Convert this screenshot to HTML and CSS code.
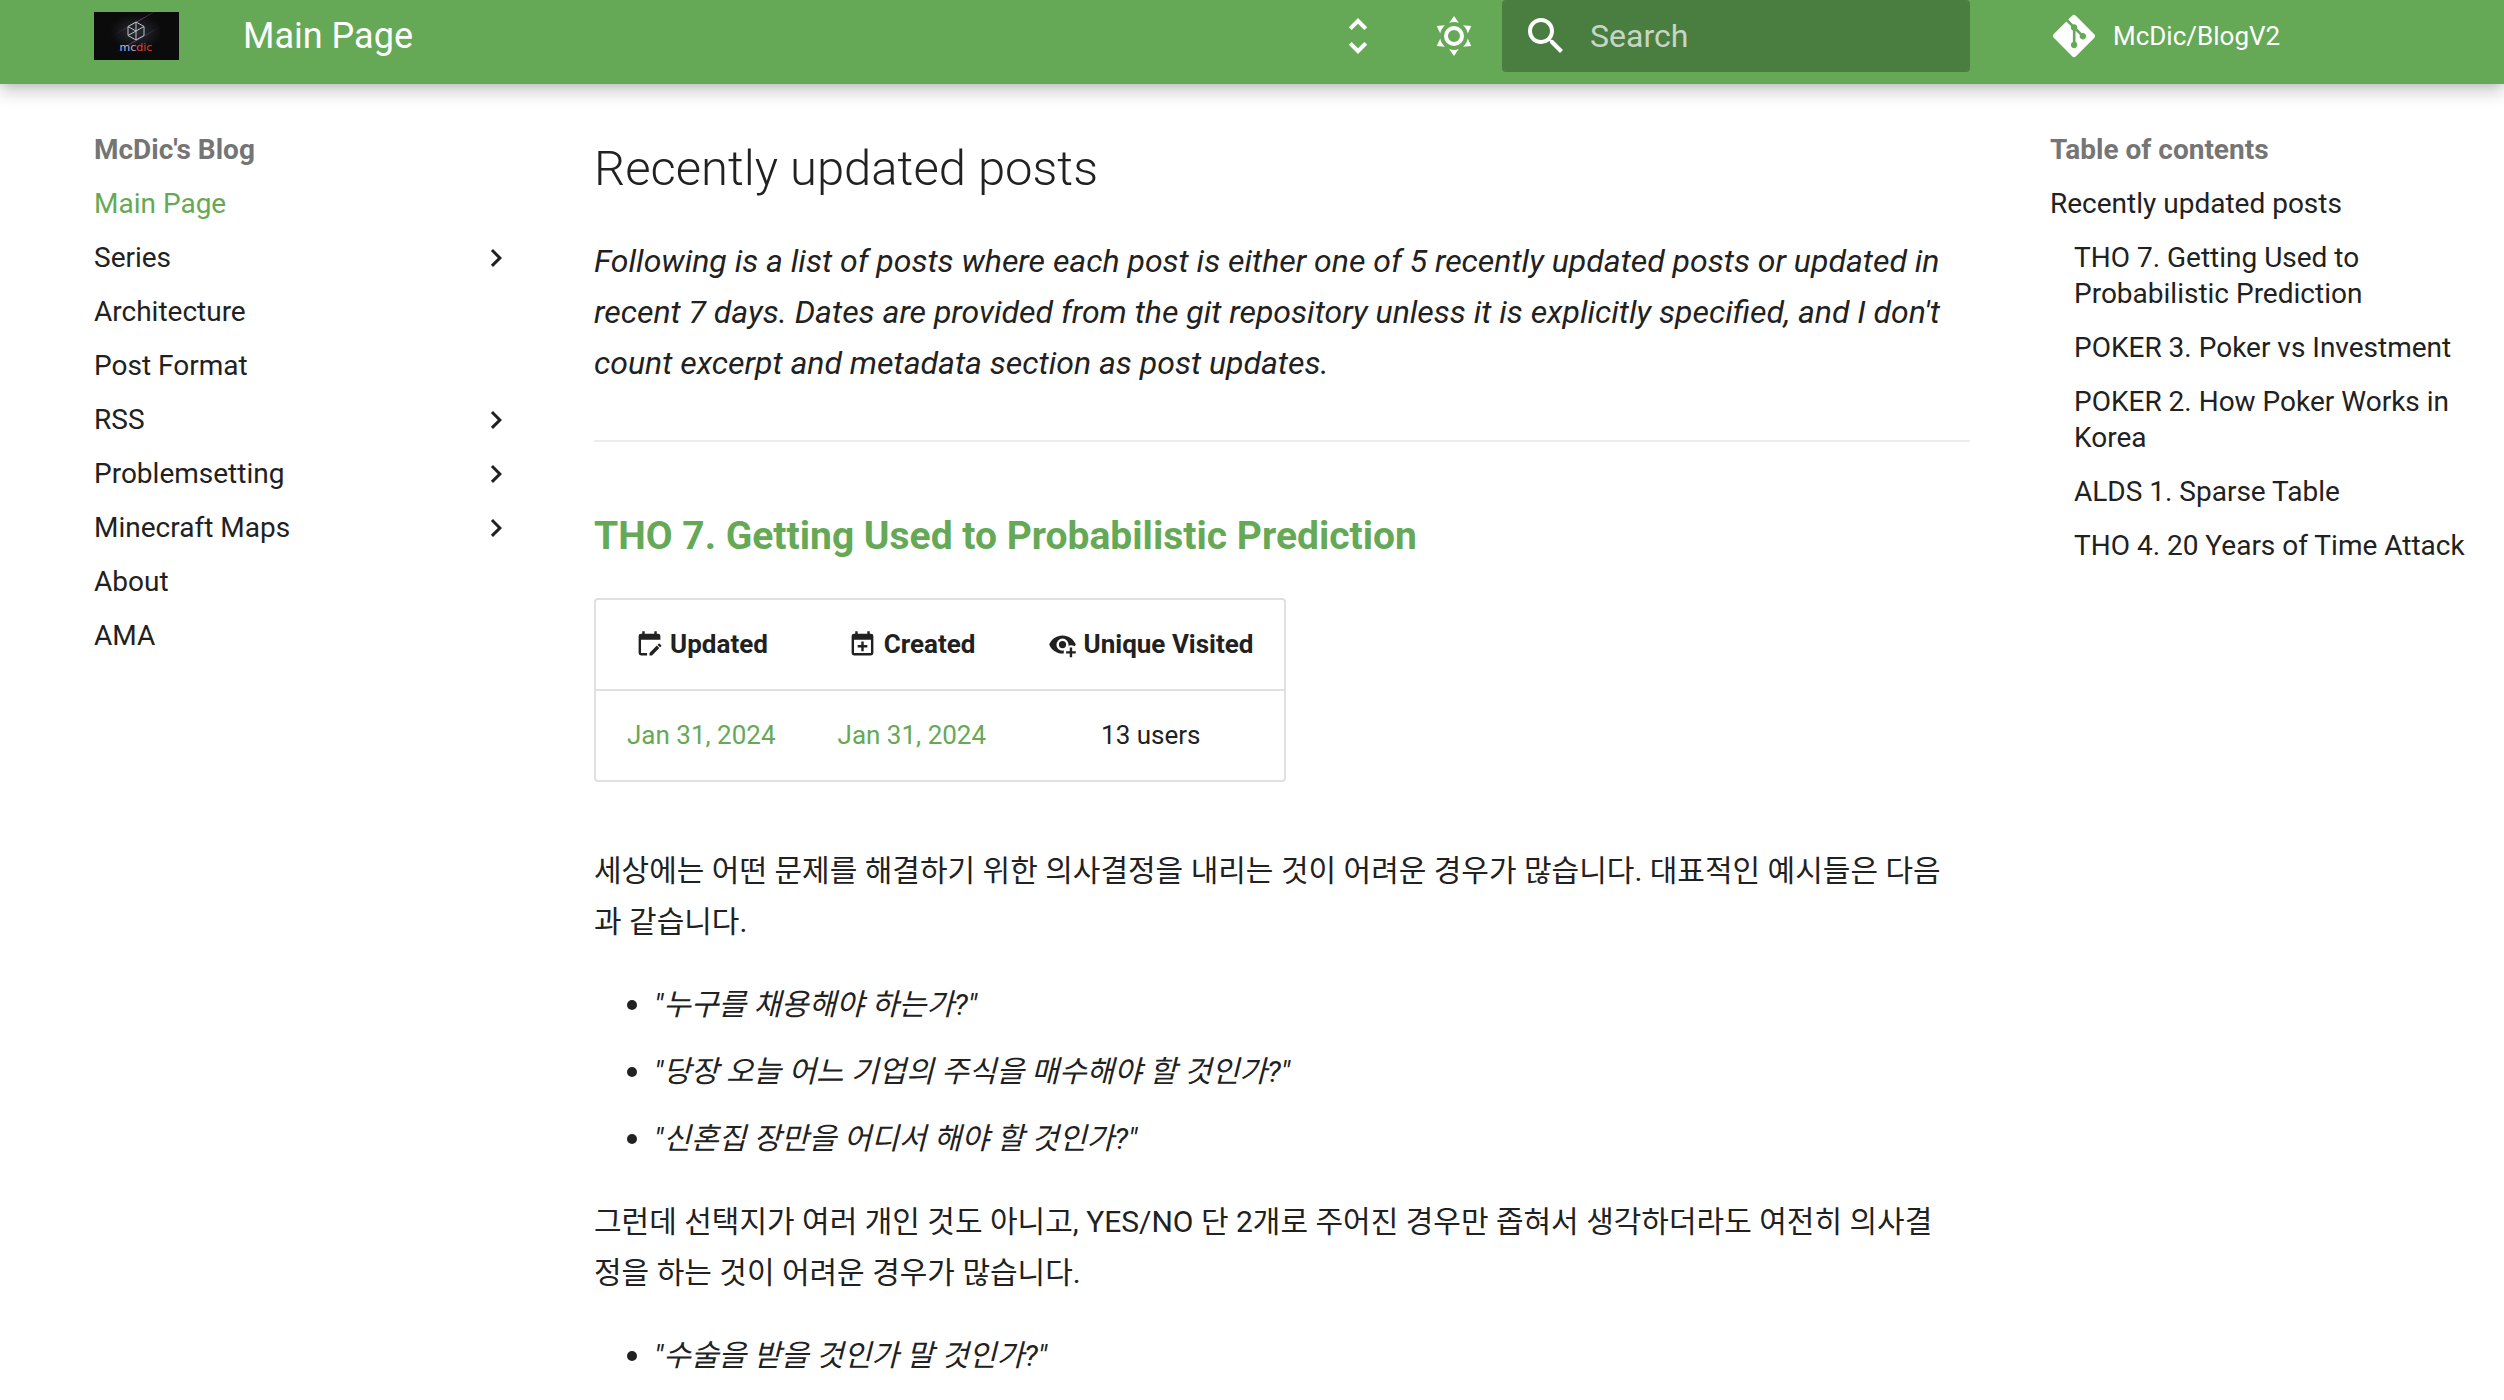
FILE: index.html
```html
<!DOCTYPE html>
<html lang="ko">
<head>
<meta charset="utf-8">
<title>Main Page - McDic's Blog</title>
<link rel="stylesheet" href="styles.css">
</head>
<body>
<header class="header">
  <div class="header-inner">
    <a class="logo" href="#" aria-label="McDic's Blog">
      <svg viewBox="0 0 85 48" width="85" height="48">
        <defs>
          <linearGradient id="word" x1="29" x2="56" y1="0" y2="0" gradientUnits="userSpaceOnUse">
            <stop offset="0" stop-color="#9cc8f4"/><stop offset=".35" stop-color="#c9b4dc"/><stop offset=".6" stop-color="#d8483c"/><stop offset="1" stop-color="#e0352b"/>
          </linearGradient>
          <radialGradient id="glow"><stop offset="0" stop-color="#2a2c30"/><stop offset="1" stop-color="#0b0b0c"/></radialGradient>
          <linearGradient id="streak"><stop offset="0" stop-color="#6b3a72" stop-opacity="0"/><stop offset=".5" stop-color="#7a4a80"/><stop offset="1" stop-color="#6b3a72" stop-opacity="0"/></linearGradient>
        </defs>
        <rect width="85" height="48" fill="#0b0b0c"/>
        <ellipse cx="42" cy="20" rx="26" ry="18" fill="url(#glow)"/>
        <path d="M20 23 60 0M22 40 66 15" stroke="url(#streak)" fill="none"/>
        <path d="m42 10 8 4.500v9L42 28l-8-4.500v-9zM34 14.500l8 4.500 8-4.500M42 10v18M34 23.500l8-4.500" fill="none" stroke="#b9c3cc" stroke-width="1"/>
        <text class="logo-word" x="42" y="39" text-anchor="middle" fill="url(#word)">mcdic</text>
      </svg>
    </a>
    <span class="header-title">Main Page</span>
    <button class="icon-button" type="button" aria-label="Change language">
      <svg viewBox="0 0 24 24"><path d="M12 18.170 8.830 15l-1.420 1.410L12 21l4.590-4.590L15.170 15M12 5.830 15.170 9l1.420-1.410L12 3 7.410 7.590 8.830 9 12 5.830Z"/></svg>
    </button>
    <button class="icon-button" type="button" aria-label="Switch theme">
      <svg viewBox="0 0 24 24"><path d="M12 7a5 5 0 0 1 5 5 5 5 0 0 1-5 5 5 5 0 0 1-5-5 5 5 0 0 1 5-5m0 2a3 3 0 0 0-3 3 3 3 0 0 0 3 3 3 3 0 0 0 3-3 3 3 0 0 0-3-3m0-7 2.390 3.420C13.650 5.150 12.840 5 12 5s-1.650.15-2.390.42L12 2M3.340 7l4.160-.35A7.200 7.200 0 0 0 5.940 8.500c-.44.74-.69 1.500-.83 2.290L3.340 7m.02 10 1.760-3.770a7.131 7.131 0 0 0 2.380 4.140L3.360 17M20.650 7l-1.770 3.790a7.020 7.020 0 0 0-2.380-4.150l4.150.36m-.01 10-4.140.36c.59-.51 1.120-1.140 1.540-1.860.42-.73.69-1.500.83-2.290L20.640 17M12 22l-2.410-3.440c.74.27 1.550.44 2.410.44.82 0 1.630-.17 2.370-.44L12 22Z"/></svg>
    </button>
    <label class="search">
      <svg viewBox="0 0 24 24" aria-hidden="true"><path d="M9.500 3A6.500 6.500 0 0 1 16 9.500c0 1.610-.59 3.090-1.560 4.230l.27.27h.79l5 5-1.500 1.500-5-5v-.79l-.27-.27A6.516 6.516 0 0 1 9.500 16 6.500 6.500 0 0 1 3 9.500 6.500 6.500 0 0 1 9.500 3m0 2C7 5 5 7 5 9.500S7 14 9.500 14 14 12 14 9.500 12 5 9.500 5Z"/></svg>
      <input type="text" placeholder="Search" aria-label="Search">
    </label>
    <a class="repo" href="#">
      <svg viewBox="0 0 448 512"><path d="M439.550 236.050 244 40.450a28.870 28.870 0 0 0-40.810 0l-40.660 40.630 51.520 51.520c27.060-9.140 52.680 16.770 43.390 43.680l49.660 49.660c34.230-11.800 61.180 31 35.470 56.690-26.490 26.490-70.210-2.870-56-37.340L240.220 199v121.850c25.300 12.540 22.260 41.850 9.080 55a34.340 34.340 0 0 1-48.550 0c-17.570-17.600-11.070-46.910 11.250-56v-123c-20.800-8.510-24.600-30.740-18.640-45L142.570 101 8.450 235.140a28.860 28.860 0 0 0 0 40.810l195.610 195.600a28.860 28.860 0 0 0 40.800 0l194.690-194.690a28.860 28.860 0 0 0 0-40.810z"/></svg>
      <span>McDic/BlogV2</span>
    </a>
  </div>
</header>
<div class="layout">
  <nav class="sidebar" aria-label="Navigation">
    <p class="nav-title">McDic's Blog</p>
    <ul class="nav-list">
      <li><a class="active" href="#">Main Page</a></li>
      <li><a href="#">Series</a><svg class="chevron" viewBox="0 0 24 24"><path d="M8.590 16.580 13.170 12 8.590 7.410 10 6l6 6-6 6-1.410-1.420Z"/></svg></li>
      <li><a href="#">Architecture</a></li>
      <li><a href="#">Post Format</a></li>
      <li><a href="#">RSS</a><svg class="chevron" viewBox="0 0 24 24"><path d="M8.590 16.580 13.170 12 8.590 7.410 10 6l6 6-6 6-1.410-1.420Z"/></svg></li>
      <li><a href="#">Problemsetting</a><svg class="chevron" viewBox="0 0 24 24"><path d="M8.590 16.580 13.170 12 8.590 7.410 10 6l6 6-6 6-1.410-1.420Z"/></svg></li>
      <li><a href="#">Minecraft Maps</a><svg class="chevron" viewBox="0 0 24 24"><path d="M8.590 16.580 13.170 12 8.590 7.410 10 6l6 6-6 6-1.410-1.420Z"/></svg></li>
      <li><a href="#">About</a></li>
      <li><a href="#">AMA</a></li>
    </ul>
  </nav>
  <main class="content">
    <h2>Recently updated posts</h2>
    <p class="intro"><em>Following is a list of posts where each post is either one of 5 recently updated posts or updated in recent 7 days. Dates are provided from the git repository unless it is explicitly specified, and I don't count excerpt and metadata section as post updates.</em></p>
    <hr>
    <h3><a href="#">THO 7. Getting Used to Probabilistic Prediction</a></h3>
    <table class="meta">
      <thead>
        <tr>
          <th><svg viewBox="0 0 24 24"><path d="M19 3h-1V1h-2v2H8V1H6v2H5a2 2 0 0 0-2 2v14a2 2 0 0 0 2 2h5v-2H5V8h16V5a2 2 0 0 0-2-2m2.700 10.350-1 1-2.050-2 1-1c.2-.21.540-.22.770 0l1.280 1.280c.19.200.19.520 0 .72M12 18.940V21h2.060l6.060-6.120-2.050-2L12 18.940Z"/></svg> Updated</th>
          <th><svg viewBox="0 0 24 24"><path d="M19 19V8H5v11h14M16 1h2v2h1a2 2 0 0 1 2 2v14a2 2 0 0 1-2 2H5a2 2 0 0 1-2-2V5a2 2 0 0 1 2-2h1V1h2v2h8V1m-5 8.500h2v3h3v2h-3v3h-2v-3H8v-2h3v-3Z"/></svg> Created</th>
          <th><svg viewBox="0 0 24 24"><path d="M12 4.500C7 4.500 2.730 7.610 1 12c1.730 4.390 6 7.500 11 7.500.360 0 .720 0 1.080-.05A5.900 5.900 0 0 1 13 18.500c0-.500.070-1 .190-1.500-.390.080-.780.130-1.190.130a5 5 0 1 1 5-5c0 .330-.040.650-.1.960a5.990 5.990 0 0 1 5.100.41c.390-.480.730-.980 1-1.500-1.730-4.390-6-7.500-11-7.500M12 9a3 3 0 1 0 0 6 3 3 0 0 0 0-6m6 5.500v3h-3v2h3v3h2v-3h3v-2h-3v-3h-2Z"/></svg> Unique Visited</th>
        </tr>
      </thead>
      <tbody>
        <tr><td><a href="#">Jan 31, 2024</a></td><td><a href="#">Jan 31, 2024</a></td><td>13 users</td></tr>
      </tbody>
    </table>
    <div class="excerpt">
      <p>세상에는 어떤 문제를 해결하기 위한 의사결정을 내리는 것이 어려운 경우가 많습니다. 대표적인 예시들은 다음과 같습니다.</p>
      <ul>
        <li><em>"누구를 채용해야 하는가?"</em></li>
        <li><em>"당장 오늘 어느 기업의 주식을 매수해야 할 것인가?"</em></li>
        <li><em>"신혼집 장만을 어디서 해야 할 것인가?"</em></li>
      </ul>
      <p>그런데 선택지가 여러 개인 것도 아니고, YES/NO 단 2개로 주어진 경우만 좁혀서 생각하더라도 여전히 의사결정을 하는 것이 어려운 경우가 많습니다.</p>
      <ul>
        <li><em>"수술을 받을 것인가 말 것인가?"</em></li>
      </ul>
    </div>
  </main>
  <nav class="toc" aria-label="Table of contents">
    <p class="nav-title">Table of contents</p>
    <ul class="nav-list">
      <li><a href="#">Recently updated posts</a></li>
      <li class="nested"><a href="#">THO 7. Getting Used to Probabilistic Prediction</a></li>
      <li class="nested"><a href="#">POKER 3. Poker vs Investment</a></li>
      <li class="nested"><a href="#">POKER 2. How Poker Works in Korea</a></li>
      <li class="nested"><a href="#">ALDS 1. Sparse Table</a></li>
      <li class="nested"><a href="#">THO 4. 20 Years of Time Attack</a></li>
    </ul>
  </nav>
</div>
</body>
</html>
```
FILE: styles.css
```css
:root {
  --green: #65a957;
  --text: #212121;
  --muted: #757575;
}

* { box-sizing: border-box; }

body {
  margin: 0;
  background: #fff;
  color: var(--text);
  font-family: Roboto, "Noto Sans CJK KR", sans-serif;
  font-size: 32px;
  line-height: 51px;
}

a { color: inherit; text-decoration: none; }
svg { display: block; fill: currentColor; }
ul { margin: 0; padding: 0; list-style: none; }

.header {
  position: sticky;
  top: 0;
  z-index: 1;
  background: var(--green);
  color: #fff;
  box-shadow: 0 0 8px rgba(0, 0, 0, .1), 0 8px 16px rgba(0, 0, 0, .2);
}

.header-inner {
  display: flex;
  align-items: center;
  height: 84px;
  padding: 0 40px 12px 94px;
}

.header-title {
  flex: 1;
  padding-left: 64px;
  font-size: 36px;
  line-height: 72px;
}

.logo-word { font: 500 11px "DejaVu Sans", sans-serif; }

.icon-button {
  margin: 0;
  padding: 0 24px;
  border: 0;
  background: none;
  color: inherit;
}
.icon-button svg { width: 48px; height: 48px; }

.search {
  display: flex;
  align-items: center;
  gap: 20px;
  width: 468px;
  height: 72px;
  padding: 0 20px;
  border-radius: 4px;
  background: rgba(0, 0, 0, .26);
}
.search svg { flex: none; width: 48px; height: 48px; }
.search input {
  flex: 1;
  min-width: 0;
  padding: 0;
  border: 0;
  outline: 0;
  background: none;
  color: inherit;
  font: inherit;
}
.search input::placeholder { color: rgba(255, 255, 255, .7); opacity: 1; }

.repo {
  display: flex;
  align-items: center;
  gap: 18px;
  width: 411px;
  margin-left: 83px;
  font-size: 26px;
}
.repo svg { width: 42px; height: 48px; }

.layout {
  display: grid;
  grid-template-columns: 420px minmax(0, 1fr) 422px;
  gap: 80px;
  padding: 48px 32px 0 94px;
}

.nav-title {
  margin: 0;
  color: var(--muted);
  font-size: 28px;
  font-weight: 700;
  line-height: 36px;
}
.nav-list { font-size: 28px; line-height: 36px; }
.nav-list li { display: flex; justify-content: space-between; margin-top: 18px; }
.nav-list .active { color: var(--green); }
.nav-list .nested { padding-left: 24px; }
.chevron { width: 36px; height: 36px; }

.content { padding-top: 2px; }
.content h2 { margin: 0 0 32px; font-size: 49px; font-weight: 300; line-height: 70px; }
.content h3 { margin: 64px 0 32px; font-size: 39px; font-weight: 700; line-height: 60px; }
.content h3 a, .meta a { color: var(--green); }
.content p { margin: 0 0 32px; }
.content hr { margin: 51px 0 64px; border: 0; border-top: 2px solid #ececec; }

.meta {
  border: 2px solid #e0e0e0;
  border-radius: 4px;
  border-spacing: 0;
  font-size: 26px;
  line-height: 41px;
  text-align: center;
}
.meta th, .meta td { padding: 24px 31px; }
.meta td { border-top: 2px solid #e0e0e0; }
.meta svg { display: inline-block; width: 29px; height: 29px; vertical-align: text-bottom; }

.excerpt { margin-top: 63px; font-size: 30px; }
.excerpt p { padding-right: 18px; }
.excerpt ul { margin: 0 0 32px 60px; list-style: disc; }
.excerpt li { margin-bottom: 16px; }
.excerpt li::marker { font-size: 32px; }
```
